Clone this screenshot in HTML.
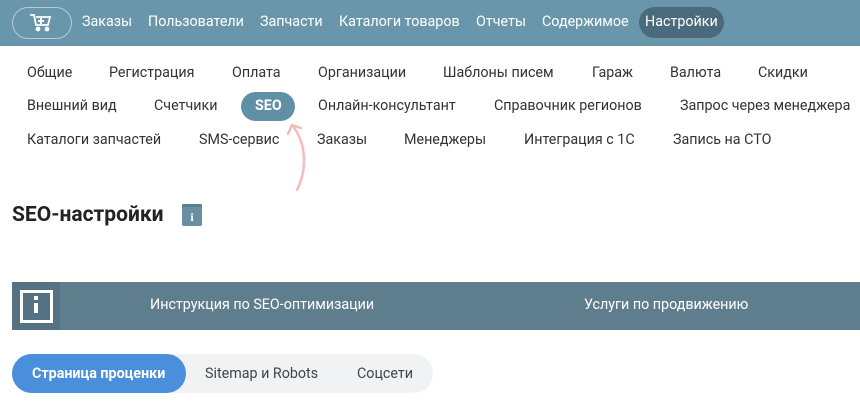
<!DOCTYPE html>
<html><head><meta charset="utf-8"><style>
body{margin:0;width:860px;height:404px;position:relative;background:#fff;font-family:Roboto,"Liberation Sans","Noto Sans CJK SC",sans-serif;overflow:hidden}
.hdr{position:absolute;left:0;top:0;width:860px;height:46px;background:#6a96ab}
.hi{position:absolute;top:14px;color:#fff;font-size:14.3px;white-space:nowrap}
.a{position:absolute;top:0;color:#333;font-size:14.3px;white-space:nowrap}
.t{position:absolute;font-size:14.3px;white-space:nowrap}
</style></head><body>
<div class="hdr">
<div style="position:absolute;left:12px;top:7px;width:58px;height:30px;border:1px solid rgba(255,255,255,.5);border-radius:16px"></div>
<svg style="position:absolute;left:28px;top:12px" width="26" height="22" viewBox="0 0 26 22" fill="none" stroke="#fff" stroke-width="1.8"><path d="M2 3h4l2 10h12l2-8H8"/><path d="M13 6v6M10 9h6"/><circle cx="10" cy="17" r="1.5" fill="#fff"/><circle cx="19" cy="17" r="1.5" fill="#fff"/></svg>
<span class="hi" style="left:82px">Заказы</span>
<span class="hi" style="left:148px">Пользователи</span>
<span class="hi" style="left:260px">Запчасти</span>
<span class="hi" style="left:339px">Каталоги товаров</span>
<span class="hi" style="left:476px">Отчеты</span>
<span class="hi" style="left:542px">Содержимое</span>
<div style="position:absolute;left:639px;top:7px;width:85px;height:31px;border-radius:16px;background:#4b6a7c"></div>
<span class="hi" style="left:645px">Настройки</span>
</div>
<div style="position:absolute;left:0;top:65px;width:860px">
<span class="a" style="left:27px">Общие</span><span class="a" style="left:109px">Регистрация</span><span class="a" style="left:232px">Оплата</span><span class="a" style="left:318px">Организации</span><span class="a" style="left:443px">Шаблоны писем</span><span class="a" style="left:592px">Гараж</span><span class="a" style="left:670px">Валюта</span><span class="a" style="left:758px">Скидки</span>
</div>
<div style="position:absolute;left:241px;top:92px;width:54px;height:29px;border-radius:15px;background:#6090a6"></div>
<div style="position:absolute;left:0;top:98px;width:860px">
<span class="a" style="left:27px">Внешний вид</span><span class="a" style="left:154px">Счетчики</span><span class="a" style="left:255px;color:#fff;font-weight:bold">SEO</span><span class="a" style="left:318px">Онлайн-консультант</span><span class="a" style="left:494px">Справочник регионов</span><span class="a" style="left:680px">Запрос через менеджера</span>
</div>
<div style="position:absolute;left:0;top:132px;width:860px">
<span class="a" style="left:27px">Каталоги запчастей</span><span class="a" style="left:199px">SMS-сервис</span><span class="a" style="left:317px">Заказы</span><span class="a" style="left:404px">Менеджеры</span><span class="a" style="left:524px">Интеграция с 1С</span><span class="a" style="left:673px">Запись на СТО</span>
</div>
<svg style="position:absolute;left:285px;top:120px" width="30" height="75" viewBox="0 0 30 75" fill="none" stroke="#f3bcbc" stroke-width="2.5" stroke-linecap="round"><path d="M12 70C22 50 22 25 8 6"/><path d="M3 14L7 5L16 8"/></svg>
<div class="t" style="left:12px;top:203px;font-size:21px;font-weight:bold;color:#222">SEO-настройки</div>
<div style="position:absolute;left:182px;top:204px;width:20px;height:22px;background:#6a8ea2;border-radius:2px;color:#fff;font:bold 12px 'Liberation Serif',serif;text-align:center;line-height:26px">i</div>
<div style="position:absolute;left:182px;top:204px;width:20px;height:3px;background:#5a7e92;border-radius:2px 2px 0 0"></div>
<div style="position:absolute;left:12px;top:282px;width:848px;height:48px;background:#5f7e8d"></div>
<div style="position:absolute;left:12px;top:282px;width:48px;height:48px;background:#557282"></div>
<div style="position:absolute;left:20px;top:290px;width:27px;height:27px;border:3px solid #fff"></div>
<div style="position:absolute;left:34px;top:296px;width:4px;height:4px;background:#fff"></div>
<div style="position:absolute;left:34px;top:303px;width:4px;height:10px;background:#fff"></div>
<div class="t" style="left:150px;top:297px;color:#fff">Инструкция по SEO-оптимизации</div>
<div class="t" style="left:584px;top:297px;color:#fff">Услуги по продвижению</div>
<div style="position:absolute;left:12px;top:354px;width:421px;height:39px;border-radius:20px;background:#f0f2f4"></div>
<div style="position:absolute;left:12px;top:354px;width:174px;height:39px;border-radius:20px;background:#4a8fdb"></div>
<div class="t" style="left:32px;top:366px;color:#fff;font-weight:bold">Страница проценки</div>
<div class="t" style="left:205px;top:366px;color:#444">Sitemap и Robots</div>
<div class="t" style="left:357px;top:366px;color:#444">Соцсети</div>
</body></html>
